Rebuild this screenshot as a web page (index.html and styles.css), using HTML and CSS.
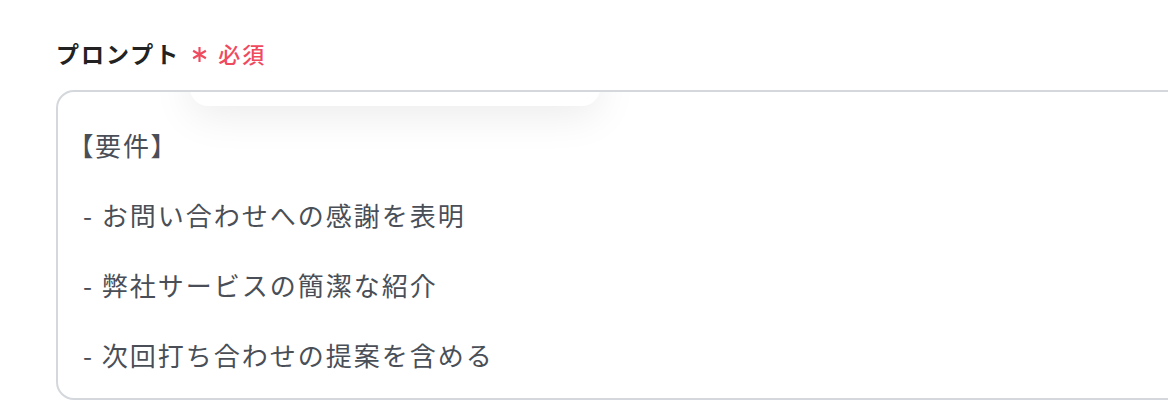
FILE: index.html
```html
<!DOCTYPE html>
<html lang="ja">
<head>
<meta name="viewport" content="width=device-width, initial-scale=1">
<title>プロンプト</title>
<link rel="stylesheet" href="styles.css">
</head>
<body>
<div class="field-label">
  <span class="label-text">プロンプト</span>
  <svg class="required-mark" viewBox="0 0 14 16" aria-hidden="true">
    <path d="M7 1v14M1 4.5l12 7M13 4.5l-12 7"/>
  </svg>
  <span class="required-text">必須</span>
</div>
<div class="prompt-box">
  <div class="popover"></div>
  <p class="heading">【要件】</p>
  <p>- お問い合わせへの感謝を表明</p>
  <p>- 弊社サービスの簡潔な紹介</p>
  <p>- 次回打ち合わせの提案を含める</p>
</div>
</body>
</html>
```

FILE: styles.css
```css
html, body {
  margin: 0;
  background-color: #fff;
}
body {
  font-family: "Noto Sans CJK JP", "Noto Sans", sans-serif;
  padding: 38px 0 0 56px;
  overflow: hidden;
  height: 404px;
  box-sizing: border-box;
}
.field-label {
  display: flex;
  align-items: center;
  height: 30px;
  margin-bottom: 22px;
}
.label-text {
  font-size: 23px;
  font-weight: 700;
  color: #222;
  letter-spacing: 2px;
}
.required-mark {
  width: 15px;
  height: 17px;
  margin: 3px 11px 0 12px;
  stroke: #ef4a5e;
  stroke-width: 2;
  fill: none;
}
.required-text {
  font-size: 22px;
  font-weight: 500;
  color: #ef4a5e;
  letter-spacing: 2px;
}
.prompt-box {
  position: relative;
  width: 1160px;
  border: 2px solid #d4d7dc;
  border-radius: 18px;
  overflow: hidden;
  padding: 35px 20px 26px 25px;
}
.prompt-box p {
  margin: 0 0 35px 0;
  font-size: 26px;
  line-height: 35px;
  color: #4a4f57;
  letter-spacing: 2px;
}
.prompt-box p:last-child {
  margin-bottom: 0;
}
.prompt-box .heading {
  font-feature-settings: "palt";
  margin-left: -3px;
}
.popover {
  position: absolute;
  left: 132px;
  top: -40px;
  width: 410px;
  height: 54px;
  background-color: #fff;
  border-radius: 18px;
  box-shadow: 0 10px 40px rgba(0, 0, 0, 0.08);
}
```
